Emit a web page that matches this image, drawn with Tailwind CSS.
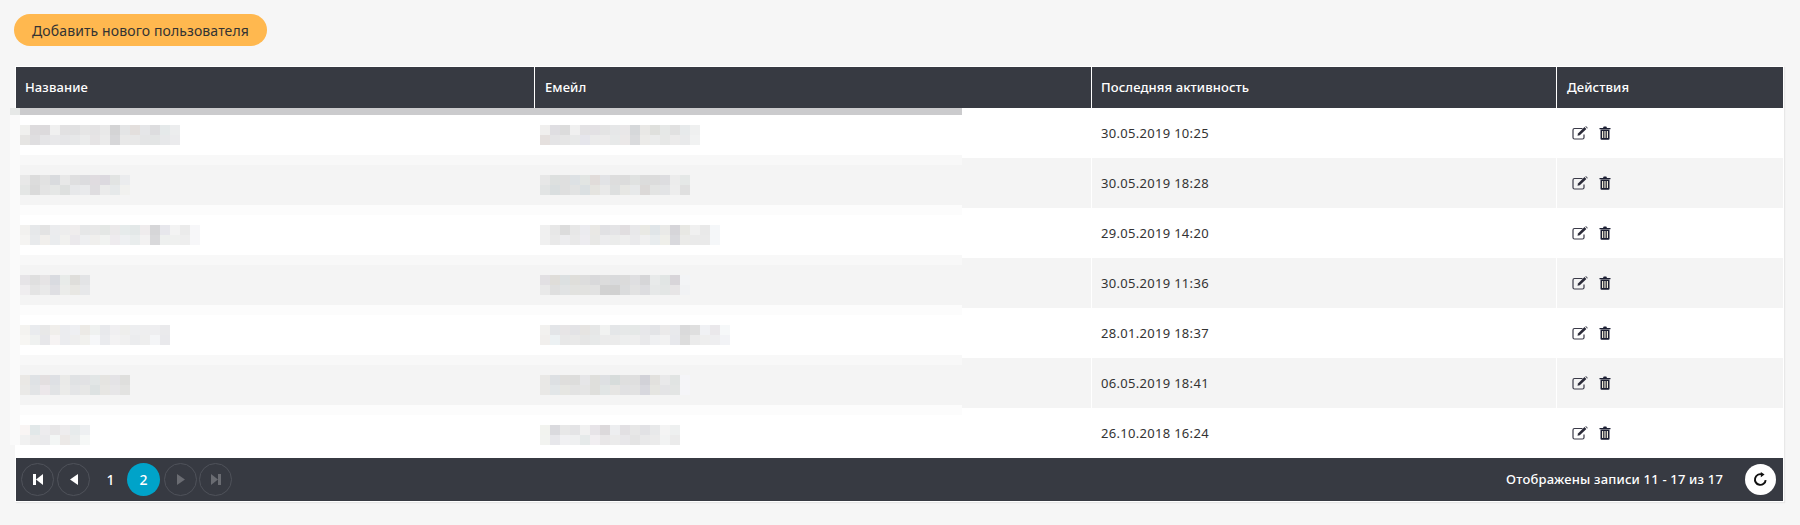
<!DOCTYPE html>
<html lang="ru">
<head>
    <meta charset="UTF-8">
    <title>Пользователи</title>
    <script src="https://cdn.jsdelivr.net/npm/@tailwindcss/browser@4"></script>
</head>
<body class="relative h-[525px] overflow-hidden bg-[#f6f6f6] font-['Noto_Sans','Liberation_Sans',sans-serif] text-[13px] text-[#333]">
    <div class="pl-[14px] pt-[14px]">
        <button class="h-[32px] w-[253px] rounded-full bg-[#ffb84f] text-[14px] tracking-[0.11px] text-[#333]">Добавить нового пользователя</button>
    </div>

    <!-- Table -->
    <div class="ml-[15px] mt-[20px] w-[1769px] bg-white p-px shadow-[1px_1px_1px_#e8e8e8]">
        <div class="grid h-[41px] grid-cols-[519px_557px_465px_225px] bg-[#373a42] text-[13px] font-medium tracking-[0.1px] text-white">
            <div class="flex items-center border-r border-white pl-[9px]">Название</div>
            <div class="flex items-center border-r border-white pl-[10px]">Емейл</div>
            <div class="flex items-center border-r border-white pl-[9px]">Последняя активность</div>
            <div class="flex items-center pl-[10px]">Действия</div>
        </div>
        <div id="rows"></div>
        <div class="flex h-[43px] items-center bg-[#373a42] pl-[5px] pr-[7px] text-white">
            <button class="flex h-[33px] w-[33px] items-center justify-center rounded-full border border-[#4f525a]">
                <svg width="10" height="11" viewBox="0 0 10 11" fill="#fff"><rect x="0" y="0" width="3" height="11"/><path d="M10 0v11L3 5.500z"/></svg>
            </button>
            <button class="ml-[3px] flex h-[33px] w-[33px] items-center justify-center rounded-full border border-[#4f525a]">
                <svg width="8" height="11" viewBox="0 0 8 11" fill="#fff"><path d="M8 0v11L0 5.500z"/></svg>
            </button>
            <span class="flex h-[33px] w-[37px] items-center justify-center pl-[4px] text-[14px] font-medium">1</span>
            <span class="flex h-[33px] w-[33px] items-center justify-center rounded-full bg-[#00a3c9] text-[14px] font-medium">2</span>
            <button class="ml-[4px] flex h-[33px] w-[33px] items-center justify-center rounded-full border border-[#4f525a]">
                <svg width="8" height="11" viewBox="0 0 8 11" fill="#6a6c72"><path d="M0 0v11l8-5.500z"/></svg>
            </button>
            <button class="ml-[2px] flex h-[33px] w-[33px] items-center justify-center rounded-full border border-[#4f525a]">
                <svg width="10" height="11" viewBox="0 0 10 11" fill="#6a6c72"><path d="M0 0v11l7-5.500z"/><rect x="7" y="0" width="3" height="11"/></svg>
            </button>
            <span class="ml-auto font-medium tracking-[0.18px]">Отображены записи 11 - 17 из 17</span>
            <button class="ml-[22px] flex h-[31px] w-[31px] items-center justify-center rounded-full bg-white">
                <svg width="15" height="15" viewBox="0 0 14 14" fill="none" stroke="#111" stroke-width="1.800"><path d="M11.800 7.500A5 5 0 1 1 8.500 2.300"/><path d="M7.300 0l3.500 2.400-3.500 2.500z" fill="#111" stroke="none"/></svg>
            </button>
        </div>
    </div>

    <!-- Blurred names and emails, laid over the first two columns -->
    <div id="mosaic" class="absolute left-[10px] top-[108px] w-[952px]"></div>

    <script>
        const dates = ['30.05.2019 10:25', '30.05.2019 18:28', '29.05.2019 14:20', '30.05.2019 11:36', '28.01.2019 18:37', '06.05.2019 18:41', '26.10.2018 16:24'];

        const editIcon = `<svg width="17" height="14" viewBox="0 0 17 14" fill="none"><path d="M10.500 2.500H2.500a1.500 1.500 0 0 0-1.500 1.500v7.500A1.500 1.500 0 0 0 2.500 13h8A1.500 1.500 0 0 0 12 11.500V8.500" stroke="#3a3a48" stroke-width="1.200"/><path d="M5.500 9.800l.5-2.300L12.500 1l1.900 1.900L7.800 9.300z" fill="#2a2a38"/><path d="M13.300.3l.6-.3 1.900 1.900-.6.7z" fill="#2a2a38"/></svg>`;
        const trashIcon = `<svg width="12" height="14" viewBox="0 0 12 14"><path d="M4 2l.7-1.500h2.600L8 2h3.500v1.300H.5V2z" fill="#1c1f33"/><path d="M1.500 3.500h9v9.300a1 1 0 0 1-1 1h-7a1 1 0 0 1-1-1z" fill="#1c1f33"/><path d="M3 5h1.200v7H3zM5.400 5h1.200v7H5.400zM7.800 5H9v7H7.800z" fill="#f0ecd8"/></svg>`;

        document.getElementById('rows').innerHTML = dates.map((date, i) => `
            <div class="grid h-[50px] grid-cols-[519px_557px_465px_225px] ${i % 2 ? 'bg-[#f4f4f4]' : 'bg-white'}">
                <div class="border-r border-white"></div>
                <div class="border-r border-white"></div>
                <div class="flex items-center border-r border-white pl-[9px] pt-px tracking-[0.3px]">${date}</div>
                <div class="flex items-center gap-[10px] pb-px pl-[15px]">${editIcon}${trashIcon}</div>
            </div>`).join('');

        // each row: name top/bottom line, email top/bottom line
        const mosaic = [
            ['f0f0ee dddbdd dcdadc f0f0f0 e2e1e2 e1e1e2 e6e6e6 e4e3e4 e9e9e9 d4d4d5 e4e5e6 e3dfdd e5e6e8 dddddf e5e9ea ecedee',
             'e6e5e3 dfdee0 e5e5e7 e8e8ea e6e6e8 e7e8e9 ebecec e6e4e5 ebebeb d7d7d9 e9e9e9 e8e8e8 e4e5e6 e3e5e5 e7e8ea ebebed',
             'f0efee dfdee2 dcdcdc f0f0f0 e3e2e4 e3e1e4 e4e4e4 e6e7e8 e9e7e8 d6d8da e9e8e6 dfe0dd e6e8e7 e1e1e1 e7eaeb eff0f0',
             'e5e0de e4e4e6 e6e6e6 e8e9e9 e6e6ec ebebeb ecebeb e7e9e9 ebe8e8 dadbdd ecebe9 ebecec e7e8e7 ecebeb e9eaeb f1f2f2'],
            ['e8e8e8 dcdcdc e2e2e2 d9dbde e8e8e8 dfdfe0 dcdcdf e0dce0 dcd9df e2e4e3 ebecee',
             'e4e6e5 dadada e4e4e4 e5e7e6 dee0df e7e8ea e9eaec dfdde0 ebebeb e6e9ea f1f1ef',
             'e7e7e7 dde0df dfdfdf dde1e4 e2e5e3 e1dcda e2e3e6 dddddd dcdcdc e0e2e1 dcdcdc dcdcdc dddde0 ececec e5e8e7',
             'e2e4e4 d9dedf dfdfdf e2e3e3 dbe0e2 e5e4e0 e9e9e9 dddfdf e7e7e4 e7e9ea dcd9d8 e3e4e3 e3e4e6 ededed e0e0e0'],
            ['f2f1ef e6e8ea e3e3e3 ebecee ededed efeded e6e7e8 e8e8e8 e4e7e5 ebe9ea e6ebeb e3e8e8 efeced d6d6d8 e7e7ec f3f3f3 ebebeb f7f7f9',
             'f5f4f2 e8eaec f1efec eaecee f1f1ef ebe9ec eeeff1 f0efed f1f3f1 eeebee eef0f2 e9eded f3f2f2 d9d9db eef0ef eff0ef eeeeee f7f7f9',
             'f0f0f0 e7e7e7 dcdcdc e7e7e7 ebebef e9e8e5 e1e1e4 e4e4e6 e1dee0 e8e8ea e9e9e4 e0e5e8 eaeae8 d6d5d9 e8e8e4 f0f0f0 e9e9e9 f5f7f9',
             'f0f0f0 e9e9e9 ededef e9e9e9 edecf0 e8e8e6 ececee ebeceb eeeeee eaeaec f0f0f0 e8ecee efefea d9d9dd ebebe9 eaeaea eaeaea f5f7f9'],
            ['e6e4e7 dfdfdf e6e4e5 d9dbe0 e8ebe9 dfdedb e3e4e6',
             'efedef e4e4e4 e9e9e9 dfdfe3 ebecea e8e7e3 e7e8ea',
             'e2e0e3 dfddd9 dce0e1 dfdeda dddddd d9d9db dcdcdc d9dadc dbdbdb dfdfe1 d6d6d8 e8eaea e1e5e4 d8d5d9 f3f4f6',
             'e9e9e9 dfdfdf e1e3e4 e2e2df e2e2e0 e2e2e2 d2d2d2 d1d1d1 dbdcdd e2e2e2 dddde0 e6e8e8 e3e6e5 e7e5e6 f1f2f4'],
            ['f4f3f0 e9ebee e8e8e8 f0eeeb ebecef eeeff2 eceae6 eff1f0 e8e9ec f0eff1 eeeeec edeef0 eeeeef eeeef0 eaeaec',
             'f7f6f3 eff1f0 e7e7ea f6f3f3 ebecef eeeeee f1f1ee f6f7f9 eaebee f3f2f3 f0f0f0 ebecee eeeeee f4f5f7 e9e9ec',
             'f2f1ef e3e5e8 e7e5e6 e3e3e6 e6e4e2 e6e7e7 f1f2f1 e4e6e8 e6e8e8 e5e8e7 e7e7ea e3e4e7 ebeaea e8e9ec dadadb dfdfdf f0f1f4 eae8eb f6f8f9',
             'f1efed ecf1f3 e8e8e8 e9e9e9 e6e6e6 e7e9e9 ebebeb ebebeb edeeee eeeeee e9e9eb eff0f2 f2f2f2 e7e8ec dddddd ebebeb eeeeee eeeef0 f2f3f6'],
            ['eae8e5 dfe2e5 e3dfe0 dee0e4 eaeae8 e0e2e4 e2e2e4 e2e6e6 e5e4e1 e4e3e6 dfdfdd',
             'eae9e7 e2e4e6 ece7ea e1e3e5 ebebe9 e4e5e7 e7e7e6 dde2e2 e7e6e3 e7e6e8 e3e3e1',
             'e9e8e6 dde0e3 dfdedc dddddc e6e6e8 dfdfdc dee0e3 d7dcdb dfdfdf dfdfdf d2d2d8 e2e1de e9e9ea e1e4e3 f5f5f8',
             'e9e8e6 e2e6e8 e6e6e2 e3e3e3 e5e5e5 dfdfdc e1e5e5 e6e5e3 e1e1e3 e2e2e2 d8d8de e5e5e1 e4e4e6 e3e5e4 f5f5f8'],
            ['f9f5f4 e2e8e9 edecee e8e7e8 eeedee e7ebec eef0f2',
             'f1f1f1 ebebeb eaeaec f3f6f5 ece9e7 ebeded f6f8f7',
             'f2f3ef dadade e8e8e8 e4e4e6 f1f1f1 e7e4e8 dcd9db edeef0 e2e0e3 e7e7e7 e2e2e5 e8e9ea f4f4f4 eef0f0',
             'f2f3f0 e7e7eb f1f1f3 eff0f1 e6eaea f1eef1 e9e7e8 ebebeb e8e7ea e4e4e4 e9e9ea ebebeb f2f3f3 ebebeb']
        ];

        const line = colors => `<div class="flex">${colors.split(' ').map(c => `<div class="h-[10px] w-[10px]" style="background:#${c}"></div>`).join('')}</div>`;

        const band = (row, i) => `
            ${i ? `<div class="h-[10px] ml-[10px] ${i % 2 ? 'bg-[#f8f8f8]' : 'bg-[#fcfcfc]'}"></div>` : ''}
            <div class="ml-[10px] flex pt-[10px] ${i % 2 ? 'bg-[#f4f4f4]' : 'bg-white'} ${i < 6 ? 'pb-[10px]' : ''}">
                <div class="w-[520px]">${line(row[0])}${line(row[1])}</div>
                <div>${line(row[2])}${line(row[3])}</div>
            </div>`;

        document.getElementById('mosaic').innerHTML = `
            <div class="flex h-[7px]"><div class="w-[10px] bg-[#e6e8e7]"></div><div class="flex-1 bg-[#cbcbcd]"></div></div>
            <div class="relative">
                <div class="absolute inset-y-0 left-0 w-[10px] bg-[#fafafa]"></div>
                ${mosaic.map(band).join('')}
            </div>`;
    </script>
</body>
</html>
